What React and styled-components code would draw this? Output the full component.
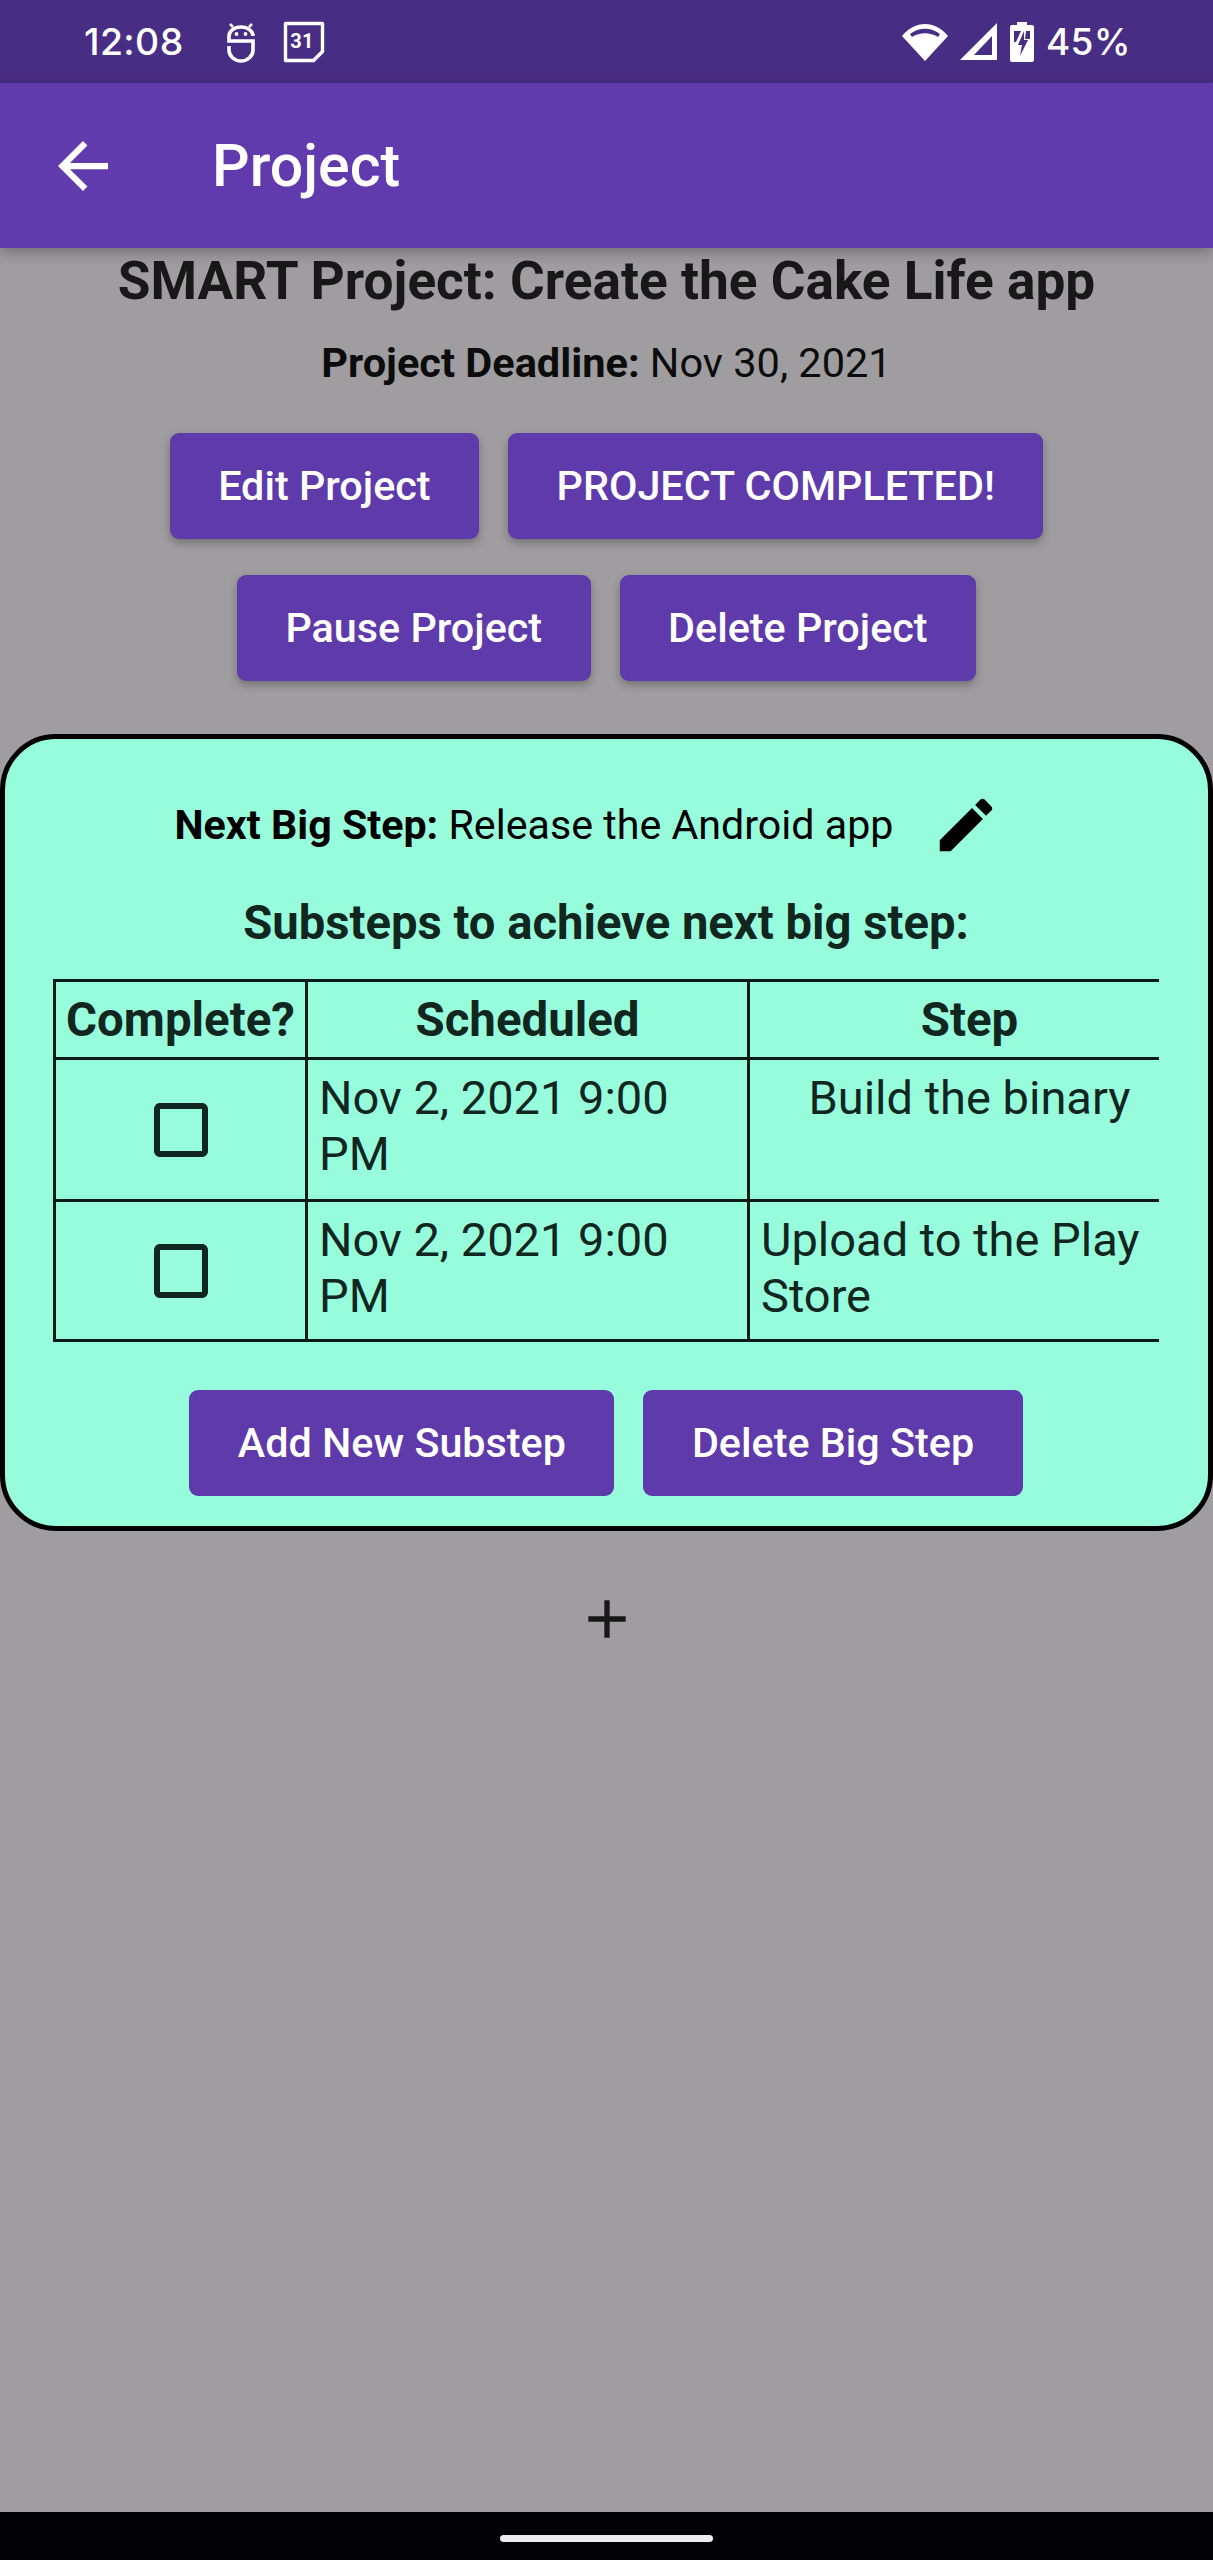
import React from "react";
import styled, { createGlobalStyle } from "styled-components";

const Global = createGlobalStyle`
  html, body { margin: 0; padding: 0; background: #9f9da0; }
  * { box-sizing: border-box; }
`;
const Page = styled.div`
  width: 1213px; height: 2560px; display: flex; flex-direction: column;
  font-family: Roboto, "Liberation Sans", sans-serif; background: #9f9da0; color: #181818; overflow: hidden;
`;
const StatusBar = styled.div`
  height: 83px; background: #482d84; color: #fff; display: flex; align-items: center;
  padding: 0 82px 0 84px; letter-spacing: 0.4px;
`;
const StatusTime = styled.span` margin-right: 42px; font-family: Inter, Roboto, sans-serif; font-weight: 500; font-size: 37.4px; `;
const StatusGroup = styled.div` display: flex; align-items: center; gap: 27px; `;
const StatusRight = styled(StatusGroup)` margin-left: auto; gap: 12px; `;
const StatusPercent = styled.span` font-family: Inter, Roboto, sans-serif; font-weight: 500; font-size: 37px; `;
const AppBar = styled.header`
  height: 165px; background: #613bad; color: #fff; display: flex; align-items: center;
  padding-left: 58px; box-shadow: 0 4px 14px rgba(0,0,0,.3); position: relative; z-index: 1;
`;
const AppTitle = styled.h1` margin: 0 0 0 104px; font-size: 59px; font-weight: 500; `;
const Main = styled.main` flex: 1; display: flex; flex-direction: column; align-items: center; `;
const Title = styled.h2` margin: 0; padding-top: 4px; font-size: 53.2px; line-height: 58px; font-weight: 700; text-align: center; `;
const Deadline = styled.p` margin: 27px 0 0; font-size: 41.5px; line-height: 52px; color: #0c0c0c; text-align: center; `;
const Bold = styled.b` font-weight: 700; `;
const ButtonRow = styled.div` display: flex; justify-content: center; gap: 29px; margin-top: ${p => p.$top}px; `;
const Button = styled.button`
  height: 106px; padding: 0 48.5px; border: 0; border-radius: 9px; background: #5f3aab; color: #fff;
  font: 500 41.3px Roboto, sans-serif; box-shadow: ${p => p.$flat ? "none" : "0 4px 8px rgba(0,0,0,.28)"};
`;
const Card = styled.section`
  align-self: stretch; margin-top: 53px; height: 797px; border: 5px solid #000; border-radius: 56px; background: #97fcdc;
  display: flex; flex-direction: column; align-items: center; padding: 0 49px 0 48px; color: #10261f;
`;
const NextStep = styled.div`
  display: flex; align-items: center; height: 100px; margin: 36px 36px 0 0; font-size: 41.2px; color: #000; align-self: center;
`;
const EditIcon = styled.svg` width: 70px; height: 70px; margin-left: 38px; `;
const SubHead = styled.h3` margin: 20px 0 0; font-size: 47.2px; line-height: 56px; font-weight: 700; `;
const TableClip = styled.div` align-self: stretch; margin-top: 28px; overflow: hidden; `;
const Table = styled.table` border-collapse: collapse; table-layout: fixed; width: 1136px; font-size: 47px; line-height: 56px; border-top: 3px solid #0a1a15; `;
const Th = styled.th` height: 78px; border: 3px solid #0a1a15; padding: 0; font-weight: 700; font-size: 47.4px; width: ${p => p.$w}px; `;
const Td = styled.td`
  height: ${p => p.$h}px; border: 3px solid #0a1a15; padding: 10px 11px 0; vertical-align: top; text-align: ${p => p.$center ? "center" : "left"};
`;
const CheckCell = styled.td` border: 3px solid #0a1a15; padding: 0; text-align: center; vertical-align: middle; `;
const CheckIcon = styled.svg` width: 72px; height: 72px; display: block; margin: 0 auto; `;
const CardButtons = styled(ButtonRow)` margin-top: 48px; `;
const AddRow = styled.div` margin-top: 56px; height: 64px; display: flex; justify-content: center; `;
const NavBar = styled.div` height: 48px; background: #020103; display: flex; justify-content: center; padding-top: 23px; `;
const NavPill = styled.div` width: 213px; height: 7px; border-radius: 4px; background: #ecebee; `;

const Steps = [
  { text: "Build the binary", center: true, h: 142 },
  { text: "Upload to the Play Store", center: false, h: 140 },
];

export default function App() {
  return (
    <Page>
      <Global />
      <StatusBar>
        <StatusTime>12:08</StatusTime>
        <StatusGroup>
          <svg width="30" height="42" viewBox="0 0 30 42" fill="none" stroke="#fff" strokeWidth="3.6">
            <path d="M27 15A12 9 0 0 0 3 15V20H27V29A12 11 0 0 1 3 29V25" />
            <path d="M4 3l3 3M26 3l-3 3" strokeWidth="2.5" />
            <circle cx="10.5" cy="13" r="1.9" fill="#fff" stroke="none" />
            <circle cx="19.5" cy="13" r="1.9" fill="#fff" stroke="none" />
          </svg>
          <svg width="42" height="42" viewBox="0 0 42 42" fill="none">
            <path d="M2.5 2.5h37v28l-9 9h-28z" stroke="#fff" strokeWidth="3.4" strokeLinejoin="round" />
            <text x="19" y="27" fontFamily="Roboto, sans-serif" fontWeight="700" fontSize="20" fill="#fff" textAnchor="middle">31</text>
          </svg>
        </StatusGroup>
        <StatusRight>
          <svg width="46" height="38" viewBox="0 0 46 38">
            <path fill="#fff" d="M0 13C13 -3 33 -3 46 13L23 38Z" />
            <path fill="#482d84" d="M8 11C17 4 29 4 38 11L36 14C28 9 18 9 10 14Z" />
          </svg>
          <svg width="38" height="38" viewBox="0 0 38 38">
            <path fill="#fff" fillRule="evenodd" d="M37 0V37H0ZM32 13 14 32H32Z" />
          </svg>
          <svg width="24" height="40" viewBox="0 0 24 40">
            <path fill="#fff" d="M7 0H17V3H22A2 2 0 0 1 24 5V38A2 2 0 0 1 22 40H2A2 2 0 0 1 0 38V5A2 2 0 0 1 2 3H7Z" />
            <path fill="#482d84" d="M4 9H11L6 20H4ZM20 9V17H15L16 9Z" />
            <path fill="#482d84" d="M14 9L8 23H12L10 34L18 18H14Z" />
          </svg>
          <StatusPercent>45%</StatusPercent>
        </StatusRight>
      </StatusBar>
      <AppBar>
        <svg width="50" height="50" viewBox="4 4 16 16" fill="#fff">
          <path d="M20 11H7.83l5.59-5.59L12 4l-8 8 8 8 1.41-1.41L7.83 13H20v-2z" />
        </svg>
        <AppTitle>Project</AppTitle>
      </AppBar>
      <Main>
        <Title>SMART Project: Create the Cake Life app</Title>
        <Deadline><Bold>Project Deadline:</Bold> Nov 30, 2021</Deadline>
        <ButtonRow $top={44}>
          <Button>Edit Project</Button>
          <Button>PROJECT COMPLETED!</Button>
        </ButtonRow>
        <ButtonRow $top={36}>
          <Button>Pause Project</Button>
          <Button>Delete Project</Button>
        </ButtonRow>
        <Card>
          <NextStep>
            <span><Bold>Next Big Step:</Bold> Release the Android app</span>
            <EditIcon viewBox="0 0 24 24" fill="#000">
              <path d="M3 17.25V21h3.75L17.81 9.94l-3.75-3.75L3 17.25zM20.71 7.04c.39-.39.39-1.02 0-1.41l-2.34-2.34c-.39-.39-1.02-.39-1.41 0l-1.83 1.83 3.75 3.75 1.83-1.83z" />
            </EditIcon>
          </NextStep>
          <SubHead>Substeps to achieve next big step:</SubHead>
          <TableClip>
            <Table>
              <thead>
                <tr>
                  <Th $w={252}>Complete?</Th>
                  <Th $w={442}>Scheduled</Th>
                  <Th $w={442}>Step</Th>
                </tr>
              </thead>
              <tbody>
                {Steps.map(s => (
                  <tr key={s.text}>
                    <CheckCell>
                      <CheckIcon viewBox="0 0 24 24" fill="#10261f">
                        <path d="M19 5v14H5V5h14m0-2H5c-1.1 0-2 .9-2 2v14c0 1.1.9 2 2 2h14c1.1 0 2-.9 2-2V5c0-1.1-.9-2-2-2z" />
                      </CheckIcon>
                    </CheckCell>
                    <Td $h={s.h}>Nov 2, 2021 9:00 PM</Td>
                    <Td $h={s.h} $center={s.center}>{s.text}</Td>
                  </tr>
                ))}
              </tbody>
            </Table>
          </TableClip>
          <CardButtons>
            <Button $flat>Add New Substep</Button>
            <Button $flat>Delete Big Step</Button>
          </CardButtons>
        </Card>
        <AddRow>
          <svg width="64" height="64" viewBox="0 0 24 24" fill="#181818">
            <path d="M19 13h-6v6h-2v-6H5v-2h6V5h2v6h6v2z" />
          </svg>
        </AddRow>
      </Main>
      <NavBar><NavPill /></NavBar>
    </Page>
  );
}
